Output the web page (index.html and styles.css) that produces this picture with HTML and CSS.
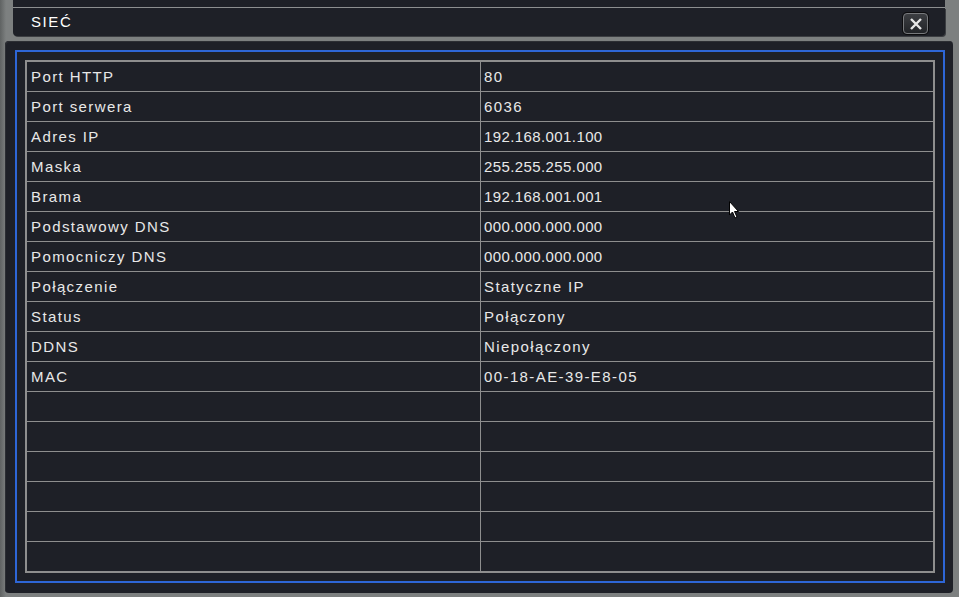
FILE: index.html
```html
<!DOCTYPE html>
<html>
<head>
<meta charset="utf-8">
<link rel="stylesheet" href="styles.css">
</head>
<body>

<div class="top"></div>
<div class="titlebar">
	<span class="caption">SIEĆ</span>
	<button class="close">
		<svg width="16" height="14" viewBox="0 0 16 14"><path d="M3 2 L13 12 M13 2 L3 12" stroke="#e6e6e6" stroke-width="2.4" fill="none"/></svg>
	</button>
</div>

<div class="panel">
	<div class="frame">
		<div class="grid">
			<div class="cell">Port HTTP</div><div class="cell val">80</div>
			<div class="cell">Port serwera</div><div class="cell val">6036</div>
			<div class="cell">Adres IP</div><div class="cell val ip">192.168.001.100</div>
			<div class="cell">Maska</div><div class="cell val ip">255.255.255.000</div>
			<div class="cell">Brama</div><div class="cell val ip">192.168.001.001</div>
			<div class="cell">Podstawowy DNS</div><div class="cell val ip">000.000.000.000</div>
			<div class="cell">Pomocniczy DNS</div><div class="cell val ip">000.000.000.000</div>
			<div class="cell">Połączenie</div><div class="cell val">Statyczne IP</div>
			<div class="cell">Status</div><div class="cell val">Połączony</div>
			<div class="cell">DDNS</div><div class="cell val">Niepołączony</div>
			<div class="cell">MAC</div><div class="cell val">00-18-AE-39-E8-05</div>
			<div class="cell"></div><div class="cell val"></div>
			<div class="cell"></div><div class="cell val"></div>
			<div class="cell"></div><div class="cell val"></div>
			<div class="cell"></div><div class="cell val"></div>
			<div class="cell"></div><div class="cell val"></div>
			<div class="cell"></div><div class="cell val"></div>
		</div>
	</div>
</div>

<!--mouse pointer-->
<svg class="cursor" width="12" height="20" viewBox="0 0 12 20"><path d="M0.5 0.5 L0.5 14 L3.5 11 L6 17 L8 16 L5.5 10.5 L9.5 10.5 Z" fill="#fff" stroke="#000" stroke-width="1"/></svg>

</body>
</html>
```

FILE: styles.css
```css
body		{ margin:0;
		  width:959px;
		  height:597px;
		  overflow:hidden;
		  background:linear-gradient(to right,#5f6262 0px,#7d8080 6px,#7d8080 100%);
		  font-family:"Liberation Sans",Arial,sans-serif;
		  position:relative;
}

div.top		{ height:7px;
		  margin:0 14px 0 13px;
		  background:#1e2027;
		  border-bottom:1px solid #8d8f90;
}

div.titlebar	{ height:28px;
		  margin:0 14px 0 13px;
		  background:#1e2027;
		  border-radius:0 0 4px 4px;
		  box-shadow:1px 1px 0 #3c3e42;
		  display:flex;
		  align-items:center;
		  justify-content:space-between;
		  padding:0 17px 0 18px;
}

span.caption	{ color:#ffffff;
		  font-size:15px;
		  letter-spacing:1.6px;
		  margin-top:-1px;
}

button.close	{ width:25px;
		  height:21px;
		  padding:0;
		  margin-top:3px;
		  border:1px solid #77797c;
		  border-radius:4px;
		  background:linear-gradient(#3c3e42,#222428);
		  box-shadow:0 0 0 1px #0c0c0e;
		  display:flex;
		  align-items:center;
		  justify-content:center;
}

div.panel	{ margin:5px 6px 0 5px;
		  background:#1e2027;
		  border-radius:4px;
		  box-shadow:inset 1px 1px 0 #2c2e33;
		  padding:9px 8px 10px 10px;
}

div.frame	{ border:2px solid #2e66d6;
		  padding:8px;
}

div.grid	{ display:grid;
		  grid-template-columns:453px 1fr;
		  grid-template-rows:repeat(17,30px);
		  border:2px solid #8e8e8e;
		  border-top-width:1px;
		  background:#1e2027;
}

div.cell	{ color:#e8e8e8;
		  font-size:15px;
		  letter-spacing:1.4px;
		  line-height:29px;
		  padding-left:4px;
		  border-top:1px solid #8e8e8e;
		  white-space:nowrap;
}

div.cell.val	{ border-left:1px solid #8e8e8e;
		  padding-left:3px;
}

div.cell.ip	{ letter-spacing:0.4px;
}

svg.cursor	{ position:absolute;
		  top:201px;
		  left:729px;
}
```
